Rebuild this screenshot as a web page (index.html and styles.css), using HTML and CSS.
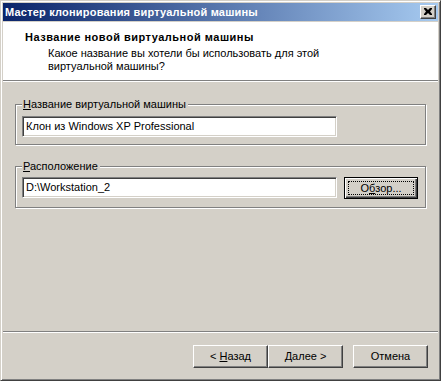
FILE: index.html
```html
<!DOCTYPE html>
<html lang="ru">
<head>
<meta charset="utf-8">
<title>Мастер клонирования виртуальной машины</title>
<link rel="stylesheet" href="styles.css">
</head>
<body>
<div class="window">
  <div class="titlebar">
    <span class="title">Мастер клонирования виртуальной машины</span>
    <span class="close-btn">
      <svg width="8" height="7" viewBox="0 0 8 7"><path d="M0 0h2l2 2 2-2h2v1l-2 2.5 2 2.5v1h-2l-2-2-2 2h-2v-1l2-2.5-2-2.5z" fill="#000"/></svg>
    </span>
  </div>
  <div class="header">
    <div class="h-title">Название новой виртуальной машины</div>
    <div class="h-sub">Какое название вы хотели бы использовать для этой<br>виртуальной машины?</div>
  </div>
  <div class="sep"></div>
  <div class="content">
    <div class="group">
      <div class="group-label"><u>Н</u>азвание виртуальной машины</div>
      <div class="row">
        <div class="input">Клон из Windows XP Professional</div>
      </div>
    </div>
    <div class="group group-2">
      <div class="group-label"><u>Р</u>асположение</div>
      <div class="row">
        <div class="input">D:\Workstation_2</div>
        <div class="btn btn-default browse"><span class="focus">О<u>б</u>зор...</span></div>
      </div>
    </div>
  </div>
  <div class="sep"></div>
  <div class="footer">
    <div class="btn"><span>&lt; <u>Н</u>азад</span></div>
    <div class="btn"><span><u>Д</u>алее &gt;</span></div>
    <div class="btn cancel"><span>Отмена</span></div>
  </div>
</div>
</body>
</html>
```

FILE: styles.css
```css
html, body {
  margin: 0;
  padding: 0;
  background: #D4D0C8;
}

body {
  font-family: "Liberation Sans", Arial, sans-serif;
  font-size: 11px;
  line-height: 13px;
  color: #000;
}

.window {
  box-sizing: border-box;
  width: 441px;
  height: 381px;
  display: flex;
  flex-direction: column;
  background: #D4D0C8;
  border: 1px solid;
  border-color: #D4D0C8 #404040 #404040 #D4D0C8;
  box-shadow: inset 1px 1px 0 #fff, inset -1px -1px 0 #808080;
  padding: 2px;
}

.titlebar {
  height: 18px;
  flex: none;
  display: flex;
  align-items: center;
  justify-content: space-between;
  background: linear-gradient(to right, #0A246A, #A6CAF0);
  margin-bottom: 1px;
}

.title {
  color: #fff;
  font-weight: bold;
  letter-spacing: 0.2px;
  padding-left: 2px;
  white-space: nowrap;
}

.close-btn {
  box-sizing: border-box;
  width: 16px;
  height: 14px;
  margin-right: 2px;
  display: flex;
  align-items: center;
  justify-content: center;
  background: #D4D0C8;
  border: 1px solid;
  border-color: #fff #404040 #404040 #fff;
  box-shadow: inset -1px -1px 0 #808080;
}

.close-btn svg {
  display: block;
  margin: -1px 0 0 -1px;
}

.header {
  height: 58px;
  flex: none;
  box-sizing: border-box;
  background: #fff;
  padding: 9px 0 0 22px;
}

.h-title {
  font-weight: bold;
  letter-spacing: 0.5px;
}

.h-sub {
  margin: 3px 0 0 23px;
}

.sep {
  flex: none;
  height: 0;
  border-top: 1px solid #808080;
  border-bottom: 1px solid #fff;
}

.content {
  flex: 1;
  padding: 22px 12px 0 12px;
}

.group {
  box-sizing: border-box;
  display: flex;
  flex-direction: column;
  height: 41px;
  border: 1px solid #808080;
  box-shadow: inset 1px 1px 0 #fff, 1px 1px 0 #fff;
  padding: 0 0 0 6px;
}

.group-2 {
  margin-top: 21px;
  height: 42px;
}

.group-label {
  align-self: flex-start;
  margin: -7px 0 0 0;
  padding: 0 2px 0 1px;
  background: #D4D0C8;
  white-space: nowrap;
}

.row {
  display: flex;
  align-items: flex-start;
  margin-top: 5px;
}

.group-2 .row {
  margin-top: 4px;
}

.input {
  box-sizing: border-box;
  width: 315px;
  height: 21px;
  padding: 3px 0 0 3px;
  background: #fff;
  border: 1px solid;
  border-color: #808080 #fff #fff #808080;
  box-shadow: inset 1px 1px 0 #404040, inset -1px -1px 0 #D4D0C8;
  white-space: nowrap;
}

.btn {
  box-sizing: border-box;
  width: 75px;
  height: 23px;
  display: flex;
  align-items: center;
  justify-content: center;
  background: #D4D0C8;
  border: 1px solid;
  border-color: #fff #404040 #404040 #fff;
  box-shadow: inset -1px -1px 0 #808080;
  white-space: pre;
}

.btn-default {
  border-color: #000;
  box-shadow: inset 1px 1px 0 #fff, inset -1px -1px 0 #404040, inset -2px -2px 0 #808080;
}

.browse {
  width: 74px;
  height: 22px;
  margin-left: 7px;
  position: relative;
}

.focus {
  position: absolute;
  left: 4px;
  top: 4px;
  right: 4px;
  bottom: 4px;
  display: flex;
  align-items: center;
  justify-content: center;
  outline: 1px dotted #000;
}

.footer {
  flex: none;
  height: 45px;
  box-sizing: border-box;
  display: flex;
  justify-content: flex-end;
  align-items: flex-start;
  padding: 12px 10px 0 0;
}

.cancel {
  margin-left: 10px;
}
```
